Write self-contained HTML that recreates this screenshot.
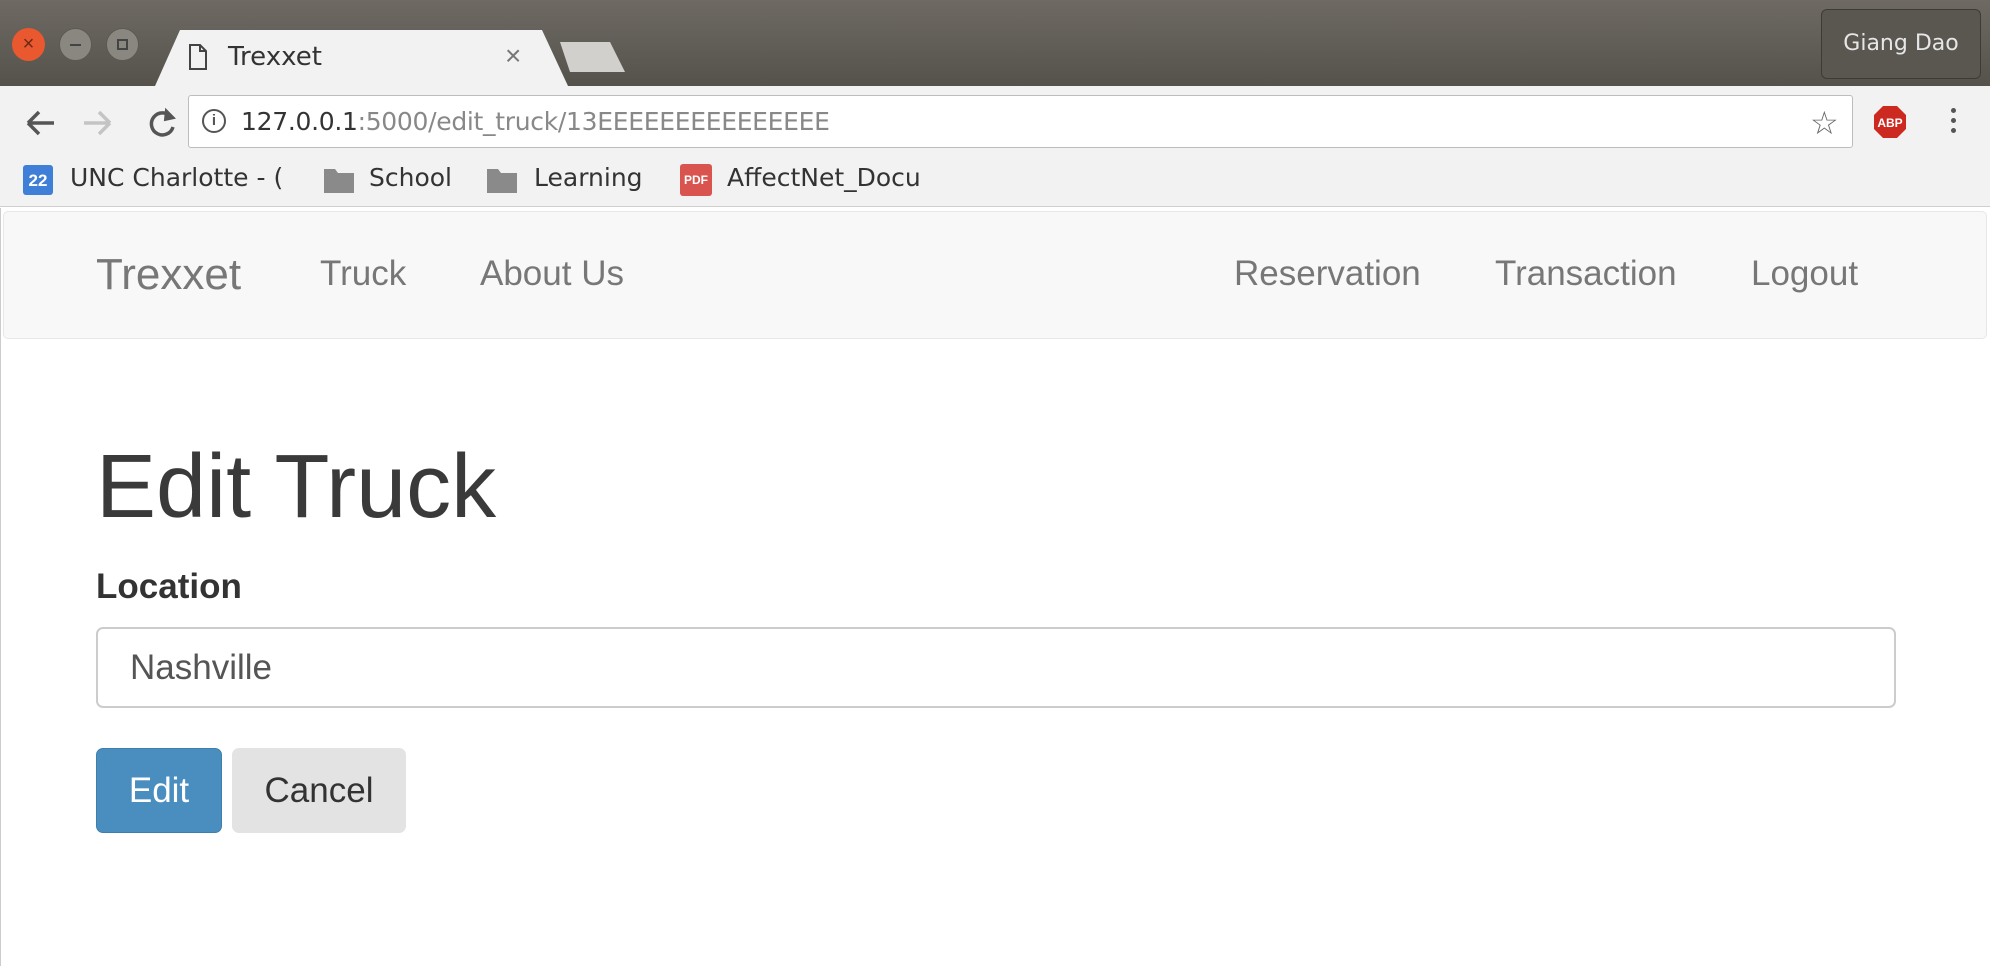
<!DOCTYPE html>
<html><head><meta charset="utf-8"><style>
*{margin:0;padding:0;box-sizing:border-box}
body{width:1990px;height:966px;overflow:hidden;background:#fff;font-family:"Liberation Sans",Arial,sans-serif;position:relative}
.a{position:absolute}
.title{left:0;top:0;width:1990px;height:86px;background:linear-gradient(#6e6a63,#55524c)}
.tb{left:0;top:86px;width:1990px;height:66px;background:#f2f2f2}
.bm{left:0;top:152px;width:1990px;height:55px;background:#f2f2f2;border-bottom:1px solid #cfcfcf}
.btxt{font-family:"DejaVu Sans","Liberation Sans",sans-serif;font-size:25px;color:#333;top:163px}
.nav{left:3px;top:211px;width:1984px;height:128px;background:#f8f8f8;border:1px solid #e7e7e7;border-radius:5px}
.nl{font-size:35px;color:#777;top:254px}
</style></head><body>
<div class="a title"></div>
<div class="a" style="left:12px;top:28px;width:33px;height:33px;border-radius:50%;background:#e9582f;color:#6b2a14;font-size:20px;text-align:center;line-height:33px">×</div>
<div class="a" style="left:59px;top:28px;width:33px;height:33px;border-radius:50%;background:#8a8780;border:1px solid #5c5953"><div class="a" style="left:10px;top:15px;width:11px;height:2px;background:#444"></div></div>
<div class="a" style="left:106px;top:28px;width:33px;height:33px;border-radius:50%;background:#8a8780;border:1px solid #5c5953"><div class="a" style="left:10px;top:10px;width:11px;height:11px;border:2px solid #444"></div></div>
<svg class="a" style="left:150px;top:28px" width="480" height="60"><path d="M5 58 L30 2 H392 L418 58 Z" fill="#f2f2f2"/><path d="M410 14 H460 L475 44 H420 Z" fill="#d2d0cc"/></svg>
<svg class="a" style="left:188px;top:44px" width="20" height="26"><path d="M2 1 H12 L18 7 V25 H2 Z M12 1 V7 H18" fill="none" stroke="#444" stroke-width="2"/></svg>
<div class="a" style="left:228px;top:42px;font-family:'DejaVu Sans',sans-serif;font-size:26px;color:#333">Trexxet</div>
<div class="a" style="left:505px;top:40px;font-size:28px;color:#777">×</div>
<div class="a" style="left:1821px;top:9px;width:160px;height:70px;border:1px solid #3e3b37;border-radius:6px;background:#5a5750;color:#e6e6e6;font-family:'DejaVu Sans',sans-serif;font-size:22px;text-align:center;line-height:68px">Giang Dao</div>
<div class="a tb"></div>
<svg class="a" style="left:20px;top:105px" width="170" height="36"><path d="M8 18 H34 M8 18 L19 7 M8 18 L19 29" stroke="#555" stroke-width="3.5" fill="none"/><path d="M64 18 H90 M90 18 L79 7 M90 18 L79 29" stroke="#c4c4c4" stroke-width="3.5" fill="none"/><path d="M151 12 A11 11 0 1 0 153 22" stroke="#555" stroke-width="3.5" fill="none"/><path d="M146 5 L154 13 L145 15 Z" fill="#555" stroke="#555" stroke-width="2"/></svg>
<div class="a" style="left:188px;top:95px;width:1665px;height:53px;background:#fff;border:1px solid #bdbdbd;border-radius:3px"></div>
<div class="a" style="left:202px;top:109px;width:24px;height:24px;border:2px solid #555;border-radius:50%;font-size:15px;font-weight:bold;text-align:center;line-height:20px;color:#555">i</div>
<div class="a" style="left:241px;top:107px;font-family:'DejaVu Sans',sans-serif;font-size:25px;letter-spacing:-0.3px;color:#333">127.0.0.1<span style="color:#888">:5000/edit_truck/13EEEEEEEEEEEEEEE</span></div>
<div class="a" style="left:1810px;top:104px;font-size:32px;color:#666">☆</div>
<svg class="a" style="left:1873px;top:105px" width="34" height="34"><polygon points="10,1 24,1 33,10 33,24 24,33 10,33 1,24 1,10" fill="#cc2a21"/><text x="17" y="22" font-family="Liberation Sans" font-weight="bold" font-size="12" fill="#fff" text-anchor="middle">ABP</text></svg>
<div class="a" style="left:1951px;top:108px;width:5px;height:5px;border-radius:50%;background:#555;box-shadow:0 10px 0 #555,0 20px 0 #555"></div>
<div class="a bm"></div>
<div class="a" style="left:23px;top:165px;width:30px;height:30px;background:#3f7fd8;border-radius:3px;color:#fff;font-size:17px;font-weight:bold;text-align:center;line-height:32px">22</div>
<div class="a btxt" style="left:70px;width:226px;overflow:hidden;white-space:nowrap">UNC Charlotte - (</div>
<svg class="a" style="left:324px;top:167px" width="30" height="26"><path d="M0 2 H11 L14 6 H30 V26 H0 Z" fill="#8a8a8a"/></svg>
<div class="a btxt" style="left:369px">School</div>
<svg class="a" style="left:487px;top:167px" width="30" height="26"><path d="M0 2 H11 L14 6 H30 V26 H0 Z" fill="#8a8a8a"/></svg>
<div class="a btxt" style="left:534px">Learning</div>
<div class="a" style="left:680px;top:164px;width:32px;height:32px;background:#d9534f;border-radius:3px;color:#fff;font-size:12px;font-weight:bold;text-align:center;line-height:32px">PDF</div>
<div class="a btxt" style="left:727px;width:226px;overflow:hidden;white-space:nowrap">AffectNet_Docu</div>
<div class="a" style="left:0;top:208px;width:1px;height:758px;background:#ccc"></div>
<div class="a nav"></div>
<div class="a" style="left:96px;top:250px;font-size:44px;color:#777">Trexxet</div>
<div class="a nl" style="left:320px">Truck</div>
<div class="a nl" style="left:480px">About Us</div>
<div class="a nl" style="left:1234px">Reservation</div>
<div class="a nl" style="left:1495px">Transaction</div>
<div class="a nl" style="left:1751px">Logout</div>
<div class="a" style="left:96px;top:437px;font-size:90px;color:#3a3a3a;line-height:100px">Edit Truck</div>
<div class="a" style="left:96px;top:567px;font-size:35px;font-weight:bold;color:#333">Location</div>
<div class="a" style="left:96px;top:627px;width:1800px;height:81px;border:2px solid #ccc;border-radius:7px;padding-left:32px;font-size:35px;color:#555;line-height:77px">Nashville</div>
<div class="a" style="left:96px;top:748px;width:126px;height:85px;background:#4a8ebf;border:1px solid #3f7fae;border-radius:7px;color:#fff;font-size:35px;text-align:center;line-height:83px">Edit</div>
<div class="a" style="left:232px;top:748px;width:174px;height:85px;background:#e3e3e3;border-radius:7px;color:#333;font-size:35px;text-align:center;line-height:85px">Cancel</div>
</body></html>
